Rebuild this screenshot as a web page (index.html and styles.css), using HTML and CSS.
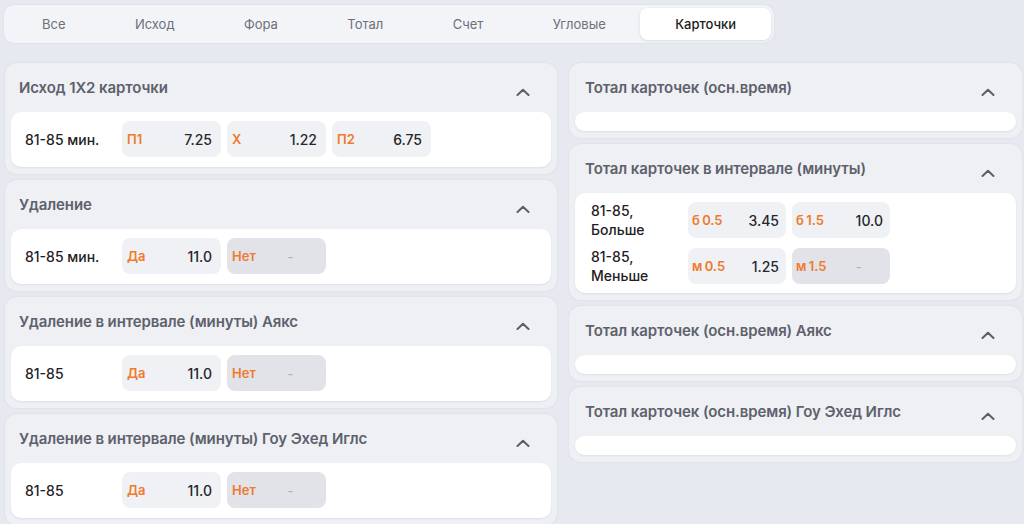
FILE: index.html
```html
<!DOCTYPE html>
<html lang="ru">
<head>
<meta charset="utf-8">
<link rel="stylesheet" href="styles.css">
</head>
<body>
<div class="page">
  <nav class="tabs">
    <div class="tab">Все</div>
    <div class="tab">Исход</div>
    <div class="tab">Фора</div>
    <div class="tab">Тотал</div>
    <div class="tab">Счет</div>
    <div class="tab">Угловые</div>
    <div class="tab active">Карточки</div>
  </nav>

  <div class="columns">
    <div class="col col-left">
      <section class="card">
        <header class="card-head"><h2>Исход 1X2 карточки</h2><svg class="chev" viewBox="0 0 14 8"><path d="M1.5 7L7 1.8 12.5 7"/></svg></header>
        <div class="card-body">
          <div class="row">
            <div class="lbl">81-85 мин.</div>
            <div class="btn"><span class="k">П1</span><span class="v">7.25</span></div>
            <div class="btn"><span class="k">Х</span><span class="v">1.22</span></div>
            <div class="btn"><span class="k">П2</span><span class="v">6.75</span></div>
          </div>
        </div>
      </section>
      <section class="card">
        <header class="card-head"><h2>Удаление</h2><svg class="chev" viewBox="0 0 14 8"><path d="M1.5 7L7 1.8 12.5 7"/></svg></header>
        <div class="card-body">
          <div class="row">
            <div class="lbl">81-85 мин.</div>
            <div class="btn"><span class="k">Да</span><span class="v">11.0</span></div>
            <div class="btn off"><span class="k">Нет</span><span class="v">-</span></div>
          </div>
        </div>
      </section>
      <section class="card">
        <header class="card-head"><h2>Удаление в интервале (минуты) Аякс</h2><svg class="chev" viewBox="0 0 14 8"><path d="M1.5 7L7 1.8 12.5 7"/></svg></header>
        <div class="card-body">
          <div class="row">
            <div class="lbl">81-85</div>
            <div class="btn"><span class="k">Да</span><span class="v">11.0</span></div>
            <div class="btn off"><span class="k">Нет</span><span class="v">-</span></div>
          </div>
        </div>
      </section>
      <section class="card">
        <header class="card-head"><h2>Удаление в интервале (минуты) Гоу Эхед Иглс</h2><svg class="chev" viewBox="0 0 14 8"><path d="M1.5 7L7 1.8 12.5 7"/></svg></header>
        <div class="card-body">
          <div class="row">
            <div class="lbl">81-85</div>
            <div class="btn"><span class="k">Да</span><span class="v">11.0</span></div>
            <div class="btn off"><span class="k">Нет</span><span class="v">-</span></div>
          </div>
        </div>
      </section>
    </div>

    <div class="col col-right">
      <section class="card">
        <header class="card-head"><h2>Тотал карточек (осн.время)</h2><svg class="chev" viewBox="0 0 14 8"><path d="M1.5 7L7 1.8 12.5 7"/></svg></header>
        <div class="card-body empty"></div>
      </section>
      <section class="card">
        <header class="card-head"><h2>Тотал карточек в интервале (минуты)</h2><svg class="chev" viewBox="0 0 14 8"><path d="M1.5 7L7 1.8 12.5 7"/></svg></header>
        <div class="card-body multi">
          <div class="row">
            <div class="lbl two">81-85,<br>Больше</div>
            <div class="btn"><span class="k">б 0.5</span><span class="v">3.45</span></div>
            <div class="btn"><span class="k">б 1.5</span><span class="v">10.0</span></div>
          </div>
          <div class="row">
            <div class="lbl two">81-85,<br>Меньше</div>
            <div class="btn"><span class="k">м 0.5</span><span class="v">1.25</span></div>
            <div class="btn off"><span class="k">м 1.5</span><span class="v">-</span></div>
          </div>
        </div>
      </section>
      <section class="card">
        <header class="card-head"><h2>Тотал карточек (осн.время) Аякс</h2><svg class="chev" viewBox="0 0 14 8"><path d="M1.5 7L7 1.8 12.5 7"/></svg></header>
        <div class="card-body empty"></div>
      </section>
      <section class="card">
        <header class="card-head"><h2>Тотал карточек (осн.время) Гоу Эхед Иглс</h2><svg class="chev" viewBox="0 0 14 8"><path d="M1.5 7L7 1.8 12.5 7"/></svg></header>
        <div class="card-body empty"></div>
      </section>
    </div>
  </div>
</div>
</body>
</html>
```

FILE: styles.css
```css
* { box-sizing: border-box; }
html, body {
  margin: 0;
  background: #e6e9ef;
  font-family: Inter, "Noto Sans", "Liberation Sans", sans-serif;
  -webkit-font-smoothing: antialiased;
}
.page {
  padding: 5px 2px 0 4px;
  height: 524px;
  overflow: hidden;
}
.tabs {
  display: inline-flex;
  padding: 3px;
  background: #f3f4f7;
  border-radius: 10px;
  height: 38px;
  box-shadow: 0 0 2px rgba(160, 168, 185, 0.25);
}
.tab {
  display: flex;
  align-items: center;
  padding: 0 34.7px;
  font-size: 13px;
  color: #6c707b;
  border-radius: 8px;
}
.tab:first-child { padding-left: 35px; }
.tab.active {
  background: #ffffff;
  color: #1c1d21;
  font-weight: 500;
  box-shadow: 0 1px 3px rgba(150, 158, 175, 0.3);
}
.columns {
  display: grid;
  grid-template-columns: 552px 453px;
  column-gap: 12px;
  margin-top: 20px;
  padding-left: 1px;
  align-items: start;
}
.col {
  display: flex;
  flex-direction: column;
  gap: 6px;
}
.card {
  background: #eef0f4;
  border-radius: 12px;
  padding: 0 6px 7px;
  box-shadow: 0 0 2px rgba(170, 178, 195, 0.3);
}
.card-head {
  height: 49px;
  display: flex;
  align-items: center;
  justify-content: space-between;
  padding: 0 21px 0 8px;
}
.col-right .card-head { padding-left: 10px; }
.card-head h2 {
  margin: 0;
  font-size: 15px;
  font-weight: 600;
  color: #5d616c;
  letter-spacing: -0.1px;
}
.chev {
  width: 14px;
  height: 8px;
  margin-top: 8px;
  fill: none;
  stroke: #5a5e69;
  stroke-width: 2;
  stroke-linecap: round;
  stroke-linejoin: round;
}
.card-body {
  background: #ffffff;
  border-radius: 10px;
  padding: 9px 14px 10px;
  box-shadow: 0 1px 2px rgba(170, 178, 195, 0.25);
}
.card-body.empty {
  height: 19px;
  padding: 0;
}
.card-body.multi {
  padding: 8px 14px 8px 16px;
  display: flex;
  flex-direction: column;
  gap: 8px;
}
.row {
  display: flex;
  align-items: center;
  gap: 6px;
}
.lbl {
  width: 91px;
  font-size: 14px;
  font-weight: 500;
  color: #1f2024;
}
.lbl.two { line-height: 19px; }
.btn {
  width: 99px;
  height: 36px;
  border-radius: 8px;
  background: #eff1f4;
  display: flex;
  align-items: center;
  justify-content: space-between;
  padding: 0 9px 0 5px;
}
.multi .btn { width: 98px; padding: 0 7px 0 4px; }
.k {
  font-size: 13px;
  font-weight: 600;
  color: #f07a2c;
  word-spacing: -1px;
}
.v {
  font-size: 14px;
  font-weight: 500;
  color: #26272c;
}
.btn.off { background: #e1e3e9; }
.btn.off .v {
  flex: 1;
  text-align: center;
  color: #b1b4bc;
  font-weight: 400;
  padding-left: 8px;
}
```
